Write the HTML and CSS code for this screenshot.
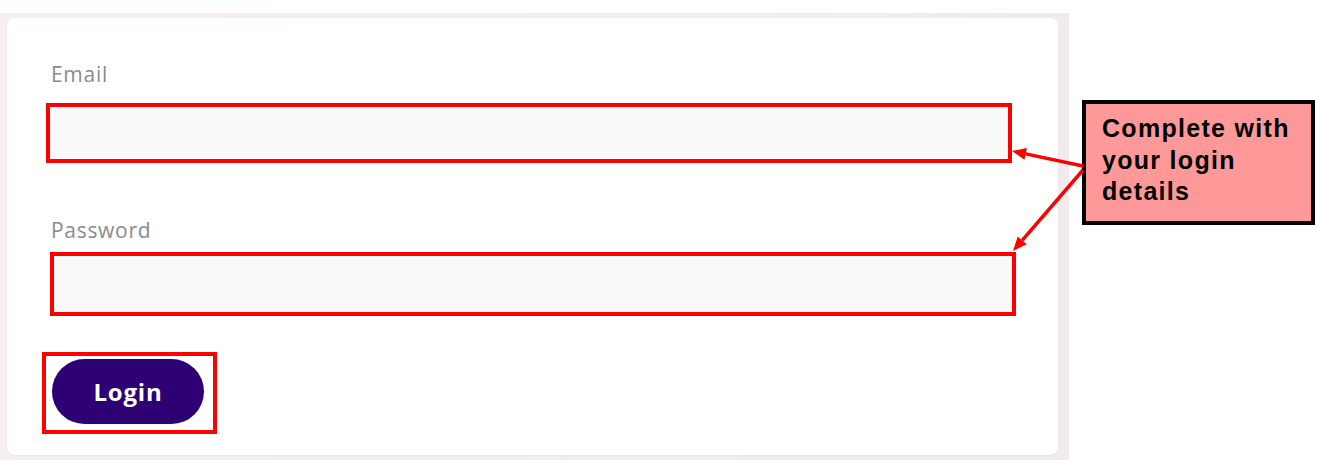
FILE: index.html
```html
<!DOCTYPE html>
<html lang="en">
<head>
<meta charset="utf-8">
<title>Login</title>
<link rel="stylesheet" href="styles.css">
</head>
<body>
<div class="page">
  <div class="frame">
    <form class="card">
      <label class="label" for="email">Email</label>
      <input class="field field-email" id="email" type="email">
      <label class="label label-pass" for="password">Password</label>
      <input class="field field-pass" id="password" type="password">
      <div class="btn-mark">
        <button class="btn" type="button">Login</button>
      </div>
    </form>
  </div>
</div>
<div class="callout">Complete with<br>your login<br>details</div>
<svg class="arrows" width="1318" height="465" viewBox="0 0 1318 465">
  <line x1="1083" y1="166" x2="1025.7" y2="153.9" stroke="#ff0000" stroke-width="3.5"/>
  <polygon points="1012,151 1026.9,148 1024.5,159.8" fill="#ff0000"/>
  <line x1="1083" y1="170" x2="1022.2" y2="240.4" stroke="#ff0000" stroke-width="3.5"/>
  <polygon points="1013,251 1026.7,244.3 1017.7,236.5" fill="#ff0000"/>
</svg>
</body>
</html>
```
FILE: styles.css
```css
html, body {
  margin: 0;
  padding: 0;
  background: #ffffff;
}
body {
  width: 1318px;
  height: 465px;
  overflow: hidden;
  font-family: "Open Sans", "Liberation Sans", sans-serif;
}
.page {
  display: flex;
  align-items: flex-start;
  padding-top: 13px;
}
.frame {
  box-sizing: border-box;
  width: 1069px;
  height: 447px;
  padding: 5px 11px 5px 7px;
  background: linear-gradient(90deg, #f7eef1 0%, #f2edf0 60%, #efebef 100%);
}
.card {
  box-sizing: border-box;
  height: 437px;
  margin: 0;
  padding: 44px 0 0 44px;
  background: #ffffff;
  border-radius: 8px;
  display: flex;
  flex-direction: column;
  align-items: flex-start;
  box-shadow: 0 1px 2px rgba(0,0,0,0.04);
}
.label {
  font-size: 21px;
  line-height: 24px;
  letter-spacing: 0.7px;
  color: #8b8b8e;
}
.field {
  box-sizing: border-box;
  display: block;
  width: 966px;
  border: 4px solid #ff0000;
  background: #f9f9f9;
  outline: none;
  padding: 0;
  margin: 0;
}
.field-email {
  height: 60px;
  margin: 17px 0 0 -5px;
}
.label-pass {
  margin-top: 55px;
}
.field-pass {
  height: 64px;
  margin: 10px 0 0 -1px;
}
.btn-mark {
  box-sizing: border-box;
  display: flex;
  width: 175px;
  height: 82px;
  margin: 36px 0 0 -9px;
  padding: 3px 9px 6px 6px;
  border: 4px solid #ff0000;
}
.btn {
  width: 152px;
  height: 65px;
  border: none;
  border-radius: 33px;
  background: #2d0073;
  color: #ffffff;
  font-family: "Open Sans", "Liberation Sans", sans-serif;
  font-weight: 700;
  font-size: 24px;
  letter-spacing: 0.8px;
  padding: 0;
  display: flex;
  align-items: center;
  justify-content: center;
}
.callout {
  position: absolute;
  left: 1082px;
  top: 100px;
  box-sizing: border-box;
  width: 233px;
  height: 125px;
  padding: 9px 0 0 16px;
  border: 4px solid #000000;
  background: #ff9999;
  font-family: "Liberation Sans", Arial, sans-serif;
  font-weight: 700;
  font-size: 25px;
  line-height: 31.5px;
  letter-spacing: 1.3px;
  color: #000000;
}
.arrows {
  position: absolute;
  left: 0;
  top: 0;
  pointer-events: none;
}
```
